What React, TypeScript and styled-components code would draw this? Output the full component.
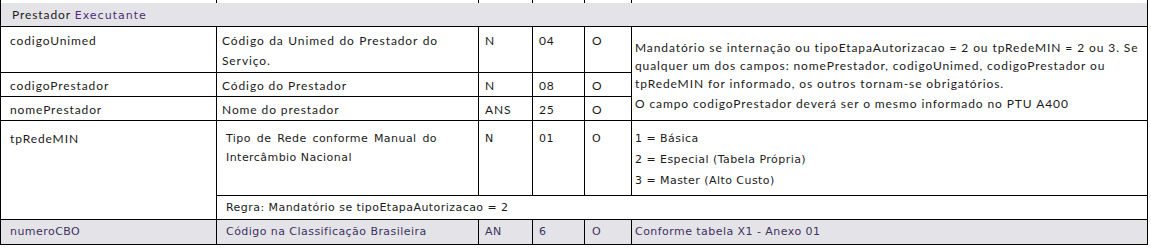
import React from "react";
import styled, { createGlobalStyle } from "styled-components";

const GlobalStyle = createGlobalStyle`
  html, body { margin: 0; padding: 0; background: #ffffff; }
  body { font-family: "Lato", "Liberation Sans", sans-serif; }
`;

const Table = styled.div`
  display: grid;
  grid-template-columns: 215px 261px 53px 51px 46px 515px;
  grid-template-rows: 2px 23px 45px 23px 23px 74px 23px 24px;
  gap: 1px;
  padding: 0 1px 1px 1px;
  background: #000000;
  width: max-content;
`;

type CellProps = {
  $span?: number;
  $rows?: number;
  $shade?: boolean;
  $alt?: boolean;
  $pt?: number;
  $pl?: number;
  $lh?: number;
  $tone?: "plain" | "purple";
};

const Cell = styled.div<CellProps>`
  grid-column: span ${(p) => p.$span ?? 1};
  grid-row: span ${(p) => p.$rows ?? 1};
  background: ${(p) => (p.$shade ? "#e4e4e8" : "#ffffff")};
  box-sizing: border-box;
  padding: ${(p) => p.$pt ?? 3}px 4px 0 ${(p) => p.$pl ?? 9}px;
  font-family: ${(p) =>
    p.$alt ? '"DejaVu Sans", "Open Sans", sans-serif' : '"Lato", "Liberation Sans", sans-serif'};
  font-size: ${(p) => (p.$alt ? 11 : 12)}px;
  letter-spacing: ${(p) => (p.$alt ? 0.45 : 0.9)}px;
  line-height: ${(p) => p.$lh ?? 20}px;
  color: ${(p) => (p.$tone === "purple" ? "#3e3160" : "#1b1b1b")};
  white-space: nowrap;
  overflow: hidden;
`;

const Justified = styled.div<{ $w: number }>`
  width: ${(p) => p.$w}px;
  white-space: normal;
  text-align: justify;
`;

const Accent = styled.span`
  color: #4a2d74;
  font-family: "DejaVu Sans", "Open Sans", sans-serif;
  font-size: 11px;
  letter-spacing: 1px;
`;

const Para = styled.div<{ $gap?: number }>`
  margin-top: ${(p) => p.$gap ?? 0}px;
`;

export default function App() {
  return (
    <>
      <GlobalStyle />
      <Table>
        <Cell />
        <Cell />
        <Cell />
        <Cell />
        <Cell />
        <Cell />

        <Cell $span={6} $shade $pt={2} $pl={11}>
          Prestador <Accent>Executante</Accent>
        </Cell>

        <Cell $pt={4}>codigoUnimed</Cell>
        <Cell $pt={4} $pl={5}>
          <Justified $w={216}>Código da Unimed do Prestador do Serviço.</Justified>
        </Cell>
        <Cell $pt={4} $pl={6}>N</Cell>
        <Cell $pt={4} $pl={6}>04</Cell>
        <Cell $pt={4} $pl={7}>O</Cell>
        <Cell $rows={3} $pt={12} $pl={3} $lh={18}>
          <Para>
            Mandatório se internação ou tipoEtapaAutorizacao = 2 ou tpRedeMIN = 2 ou 3. Se
            <br />
            qualquer um dos campos: nomePrestador, codigoUnimed, codigoPrestador ou
            <br />
            tpRedeMIN for informado, os outros tornam-se obrigatórios.
          </Para>
          <Para $gap={2}>O campo codigoPrestador deverá ser o mesmo informado no PTU A400</Para>
        </Cell>

        <Cell>codigoPrestador</Cell>
        <Cell $pl={5}>Código do Prestador</Cell>
        <Cell $pl={6}>N</Cell>
        <Cell $pl={6}>08</Cell>
        <Cell $pl={7}>O</Cell>

        <Cell>nomePrestador</Cell>
        <Cell $pl={5}>Nome do prestador</Cell>
        <Cell $pl={6}>ANS</Cell>
        <Cell $pl={6}>25</Cell>
        <Cell $pl={7}>O</Cell>

        <Cell $rows={2} $pt={8} $lh={19}>tpRedeMIN</Cell>
        <Cell $alt $pt={8} $lh={19} $pl={9}>
          <Justified $w={211}>Tipo de Rede conforme Manual do Intercâmbio Nacional</Justified>
        </Cell>
        <Cell $alt $pt={8} $lh={19} $pl={6}>N</Cell>
        <Cell $alt $pt={8} $lh={19} $pl={6}>01</Cell>
        <Cell $alt $pt={8} $lh={19} $pl={7}>O</Cell>
        <Cell $alt $pt={7} $lh={21} $pl={3}>
          1 = Básica
          <br />
          2 = Especial (Tabela Própria)
          <br />
          3 = Master (Alto Custo)
        </Cell>

        <Cell $alt $span={5} $pt={2} $pl={9}>
          Regra: Mandatório se tipoEtapaAutorizacao = 2
        </Cell>

        <Cell $alt $shade $tone="purple" $pt={2}>numeroCBO</Cell>
        <Cell $alt $shade $tone="purple" $pt={2} $pl={9}>Código na Classificação Brasileira</Cell>
        <Cell $alt $shade $tone="purple" $pt={2} $pl={6}>AN</Cell>
        <Cell $alt $shade $tone="purple" $pt={2} $pl={6}>6</Cell>
        <Cell $alt $shade $tone="purple" $pt={2} $pl={7}>O</Cell>
        <Cell $alt $shade $tone="purple" $pt={2} $pl={3}>Conforme tabela X1 - Anexo 01</Cell>
      </Table>
    </>
  );
}
